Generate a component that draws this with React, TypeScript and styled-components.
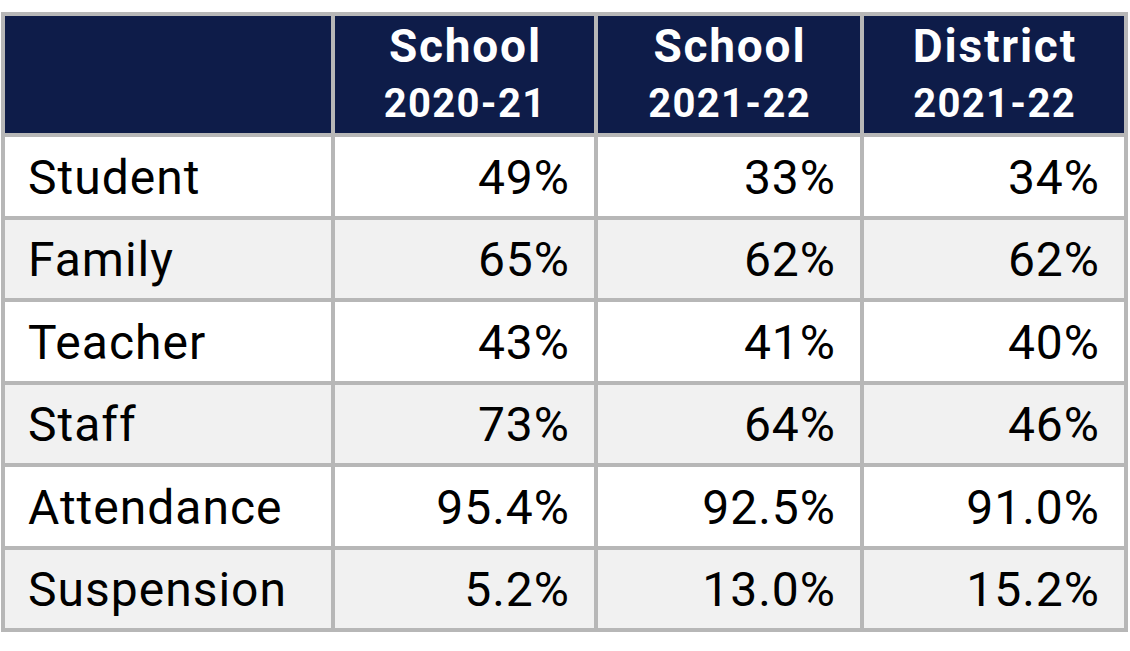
import styled, {createGlobalStyle} from "styled-components";

const GlobalStyle = createGlobalStyle`
  html, body {
    margin: 0;
    padding: 0;
    background: #ffffff;
  }
  body {
    font-family: Roboto, "Liberation Sans", sans-serif;
  }
`;

const Page = styled.div`
  padding: 12px 0 0 1px;
`;

const Table = styled.div`
  display: grid;
  width: 1127px;
  box-sizing: border-box;
  grid-template-columns: 326px 259px 262px 260px;
  grid-template-rows: 117px repeat(6, 78.5px);
  gap: 4px;
  padding: 4px;
  background: #b7b7b7;
`;

const HeadCell = styled.div`
  display: flex;
  flex-direction: column;
  align-items: center;
  justify-content: flex-start;
  padding-top: 3px;
  background: #0e1c49;
  color: #ffffff;
  font-weight: 700;
`;

const HeadTitle = styled.span`
  font-size: 46px;
  line-height: 54px;
  letter-spacing: 1.8px;
  margin-right: -1.8px;
`;

const HeadYear = styled.span`
  font-size: 40px;
  line-height: 46px;
  letter-spacing: 1.3px;
  margin-right: -1.3px;
  margin-top: 8px;
`;

const Cell = styled.div<{$shade: boolean; $right?: boolean}>`
  display: flex;
  align-items: center;
  justify-content: ${(p) => (p.$right ? "flex-end" : "flex-start")};
  padding: ${(p) => (p.$right ? "3px 24px 0 0" : "3px 0 0 23px")};
  background: ${(p) => (p.$shade ? "#f1f1f1" : "#ffffff")};
  color: #000000;
  font-size: 48px;
  line-height: 1;
  letter-spacing: 1px;
`;

const headers = [
  {title: "School", year: "2020-21"},
  {title: "School", year: "2021-22"},
  {title: "District", year: "2021-22"},
];

const rows: [string, string, string, string][] = [
  ["Student", "49%", "33%", "34%"],
  ["Family", "65%", "62%", "62%"],
  ["Teacher", "43%", "41%", "40%"],
  ["Staff", "73%", "64%", "46%"],
  ["Attendance", "95.4%", "92.5%", "91.0%"],
  ["Suspension", "5.2%", "13.0%", "15.2%"],
];

export default function App() {
  return (
    <Page>
      <GlobalStyle />
      <Table>
        <HeadCell />
        {headers.map((h, i) => (
          <HeadCell key={i}>
            <HeadTitle>{h.title}</HeadTitle>
            <HeadYear>{h.year}</HeadYear>
          </HeadCell>
        ))}
        {rows.map((r, i) =>
          r.map((v, j) => (
            <Cell key={`${i}-${j}`} $shade={i % 2 === 1} $right={j > 0}>
              {v}
            </Cell>
          ))
        )}
      </Table>
    </Page>
  );
}
